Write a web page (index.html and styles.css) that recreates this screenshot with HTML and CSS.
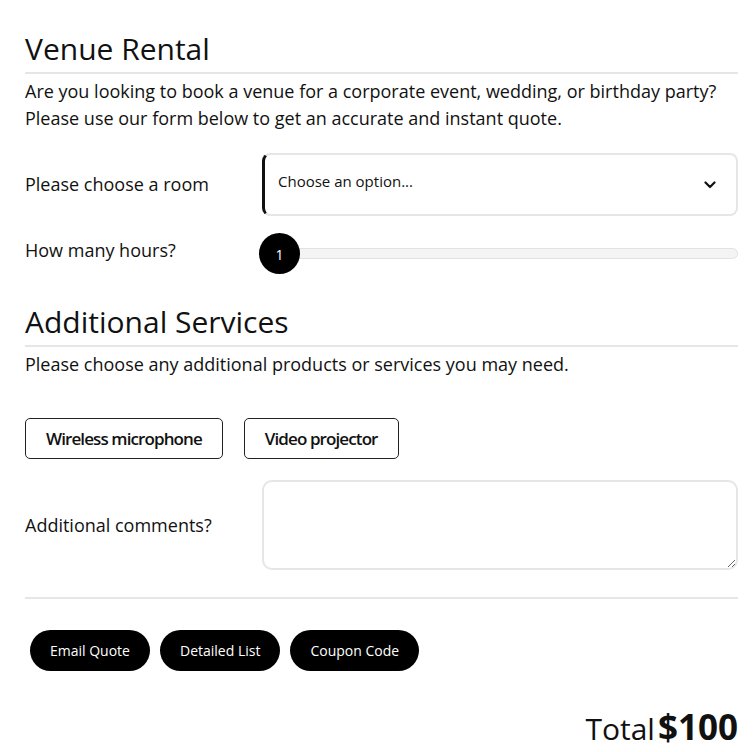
FILE: index.html
```html
<!DOCTYPE html>
<html lang="en">
<head>
<meta charset="utf-8">
<title>Venue Rental</title>
<link rel="stylesheet" href="styles.css">
</head>
<body>
<main class="form">
  <section class="section">
    <h2 class="section-title">Venue Rental</h2>
    <p class="section-desc">Are you looking to book a venue for a corporate event, wedding, or birthday party? Please use our form below to get an accurate and instant quote.</p>
    <div class="field-row field-row--room">
      <label class="field-label">Please choose a room</label>
      <div class="select">
        <span class="select-text">Choose an option...</span>
        <svg class="select-chevron" width="12" height="8" viewBox="0 0 12 8"><path d="M1.5 1.5 6 6l4.5-4.5" fill="none" stroke="#111" stroke-width="2.2" stroke-linecap="round" stroke-linejoin="round"/></svg>
      </div>
    </div>
    <div class="field-row field-row--hours">
      <label class="field-label field-label--hours">How many hours?</label>
      <div class="slider">
        <div class="slider-track"></div>
        <div class="slider-thumb">1</div>
      </div>
    </div>
  </section>
  <section class="section section--services">
    <h2 class="section-title">Additional Services</h2>
    <p class="section-desc">Please choose any additional products or services you may need.</p>
    <div class="options">
      <button class="option">Wireless microphone</button>
      <button class="option">Video projector</button>
    </div>
    <div class="field-row field-row--comments">
      <label class="field-label">Additional comments?</label>
      <textarea class="comments"></textarea>
    </div>
  </section>
  <div class="actions">
    <button class="pill">Email Quote</button>
    <button class="pill">Detailed List</button>
    <button class="pill">Coupon Code</button>
  </div>
  <div class="total">
    <span class="total-label">Total</span>
    <span class="total-value">$100</span>
  </div>
</main>
</body>
</html>
```

FILE: styles.css
```css
* { box-sizing: border-box; }
html, body { margin: 0; padding: 0; background: #fff; }
body {
  font-family: "Open Sans", "Liberation Sans", sans-serif;
  color: #111;
}
.form {
  padding: 0 15px 0 25px;
}
.section-title {
  margin: 31px 0 0;
  font-size: 30px;
  line-height: 36px;
  font-weight: 400;
  padding-bottom: 5px;
  border-bottom: 2px solid #e6e6e6;
}
.section--services .section-title { margin-top: 30px; }
.section-desc {
  margin: 4px 0 0;
  font-size: 18px;
  line-height: 27px;
}
.field-row {
  display: grid;
  grid-template-columns: 237px 1fr;
  align-items: center;
}
.field-label {
  font-size: 18px;
  line-height: 27px;
}
.field-label--hours { margin-bottom: 7px; }
.field-row--room { margin-top: 21px; }
.select {
  height: 63px;
  display: flex;
  align-items: center;
  justify-content: space-between;
  border: 2px solid #e6e6e6;
  border-left: 3px solid #111;
  border-radius: 8px;
  padding: 0 20px 0 13px;
}
.select-text {
  font-size: 15px;
  line-height: 20px;
  margin-bottom: 8px;
}
.select-chevron { display: block; }
.field-row--hours { margin-top: 17px; }
.slider {
  position: relative;
  height: 41px;
  display: flex;
  align-items: center;
}
.slider-track {
  flex: 1;
  height: 11px;
  margin-left: 18px;
  background: #f4f4f4;
  border: 1px solid #e2e2e2;
  border-radius: 6px;
}
.slider-thumb {
  position: absolute;
  left: -3px;
  top: 0;
  width: 41px;
  height: 41px;
  border-radius: 50%;
  background: #000;
  color: #fff;
  font-size: 14px;
  display: flex;
  align-items: center;
  justify-content: center;
  padding-top: 2px;
}
.options {
  margin-top: 40px;
  display: flex;
  gap: 21px;
}
.option {
  font-family: inherit;
  font-size: 17px;
  font-weight: 600;
  letter-spacing: -0.9px;
  line-height: 21px;
  height: 41px;
  color: #111;
  background: #fff;
  border: 1px solid #222;
  border-radius: 5px;
  padding: 0 20px;
}
.field-row--comments { margin-top: 21px; }
.comments {
  display: block;
  height: 90px;
  width: 100%;
  border: 2px solid #e6e6e6;
  border-radius: 10px;
  font-family: inherit;
  font-size: 15px;
  padding: 10px;
  background: #fff;
  margin: 0;
}
.actions {
  margin-top: 27px;
  border-top: 2px solid #e6e6e6;
  padding: 31px 0 0 5px;
  display: flex;
  gap: 10px;
}
.pill {
  font-family: inherit;
  font-size: 14px;
  line-height: 19px;
  height: 41px;
  color: #fff;
  background: #000;
  border: 0;
  border-radius: 21px;
  padding: 0 20px;
}
.total {
  margin-top: 36px;
  display: flex;
  justify-content: flex-end;
  align-items: baseline;
  gap: 3px;
  line-height: 40px;
}
.total-label {
  font-size: 30px;
}
.total-value {
  font-size: 35px;
  font-weight: 700;
}
```
